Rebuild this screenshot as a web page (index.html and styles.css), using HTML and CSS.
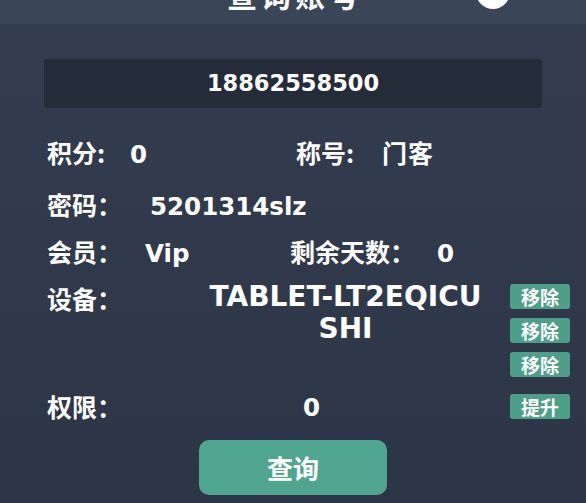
FILE: index.html
```
<!DOCTYPE html>
<html lang="zh">
<head>
<meta charset="utf-8">
<link rel="stylesheet" href="styles.css">
</head>
<body>
<div class="dialog">
  <header class="head">
    <h1 class="title">查询账号</h1>
    <span class="close"></span>
  </header>
  <div class="body">
    <div class="account">18862558500</div>
    <div class="row r1">
      <span class="lbl w83">积分:</span><span class="val v1">0</span>
      <span class="lbl w86 c2">称号:</span><span class="cjkval">门客</span>
    </div>
    <div class="row r2">
      <span class="lbl w103">密码：</span><span class="val">5201314slz</span>
    </div>
    <div class="row r3">
      <span class="lbl w98">会员：</span><span class="val vip">Vip</span>
      <span class="lbl w147">剩余天数：</span><span class="val">0</span>
    </div>
    <div class="row dev">
      <span class="lbl dlbl">设备：</span>
      <div class="devname">TABLET-LT2EQICU<br>SHI</div>
      <div class="btns">
        <button class="sbtn">移除</button>
        <button class="sbtn">移除</button>
        <button class="sbtn">移除</button>
      </div>
    </div>
    <div class="row perm">
      <span class="lbl dlbl">权限：</span>
      <div class="permval"><span class="val">0</span></div>
      <button class="sbtn">提升</button>
    </div>
    <div class="actions">
      <button class="query">查询</button>
    </div>
  </div>
</div>
</body>
</html>
```
FILE: styles.css
```
* { box-sizing: border-box; }
html, body { margin: 0; padding: 0; }
body {
  width: 586px;
  height: 503px;
  overflow: hidden;
  background: #2e3848;
  font-family: "Noto Sans CJK SC", sans-serif;
  font-weight: 700;
  color: #ffffff;
}
.dialog {
  width: 586px;
  height: 503px;
  background: linear-gradient(180deg, #333d4f 0%, #2d3647 100%);
}
.head {
  height: 24px;
  background: #3a4558;
  position: relative;
  overflow: hidden;
}
.title {
  margin: -22px 0 0 0;
  padding-left: 4px;
  text-align: center;
  font-size: 30px;
  line-height: 32px;
  font-weight: 700;
  letter-spacing: 4px;
}
.close {
  position: absolute;
  left: 476px;
  top: -25px;
  width: 34px;
  height: 34px;
  border-radius: 50%;
  background: #ffffff;
}
.body {
  padding: 35px 16px 0 47px;
}
.account {
  margin-left: -3px;
  width: 498px;
  height: 49px;
  background: #252c39;
  border-radius: 3px;
  text-align: center;
  font-family: "DejaVu Sans", sans-serif;
  font-size: 22.5px;
  line-height: 49px;
}
.row {
  display: flex;
  align-items: baseline;
  height: 28px;
  font-size: 25px;
  line-height: 28px;
}
.lbl { flex: none; }
.val {
  font-family: "DejaVu Sans", sans-serif;
  font-size: 24.5px;
  line-height: 28px;
}
.w83 { width: 83px; }
.w86 { width: 86px; }
.w103 { width: 103px; }
.w98 { width: 98px; }
.w147 { width: 147px; }
.v1 { width: 166px; }
.vip { width: 145px; }
.cjkval { letter-spacing: 1px; }
.r1 { margin-top: 30px; }
.r2 { margin-top: 24px; }
.r3 { margin-top: 19px; }
.dev {
  margin-top: 19px;
  height: auto;
  align-items: flex-start;
}
.dlbl { width: 98px; }
.devname {
  width: 365px;
  padding-left: 36px;
  text-align: center;
  font-family: "DejaVu Sans", sans-serif;
  font-size: 28px;
  line-height: 32px;
  margin-top: -3px;
}
.btns {
  display: flex;
  flex-direction: column;
  gap: 9px;
}
.sbtn {
  width: 60px;
  height: 25px;
  padding: 0;
  border: none;
  border-radius: 3px;
  background: #4e9f88;
  color: #ffffff;
  font-family: "Noto Sans CJK SC", sans-serif;
  font-weight: 700;
  font-size: 19px;
  line-height: 25px;
}
.perm {
  margin-top: 15px;
  align-items: center;
}
.permval {
  width: 365px;
  padding-left: 158px;
}
.actions {
  display: flex;
  justify-content: center;
  margin-top: 20px;
}
.query {
  width: 188px;
  height: 55px;
  border: none;
  border-radius: 10px;
  background: #50a58f;
  color: #ffffff;
  font-family: "Noto Sans CJK SC", sans-serif;
  font-weight: 700;
  font-size: 26px;
  margin-left: -31px;
}
```
